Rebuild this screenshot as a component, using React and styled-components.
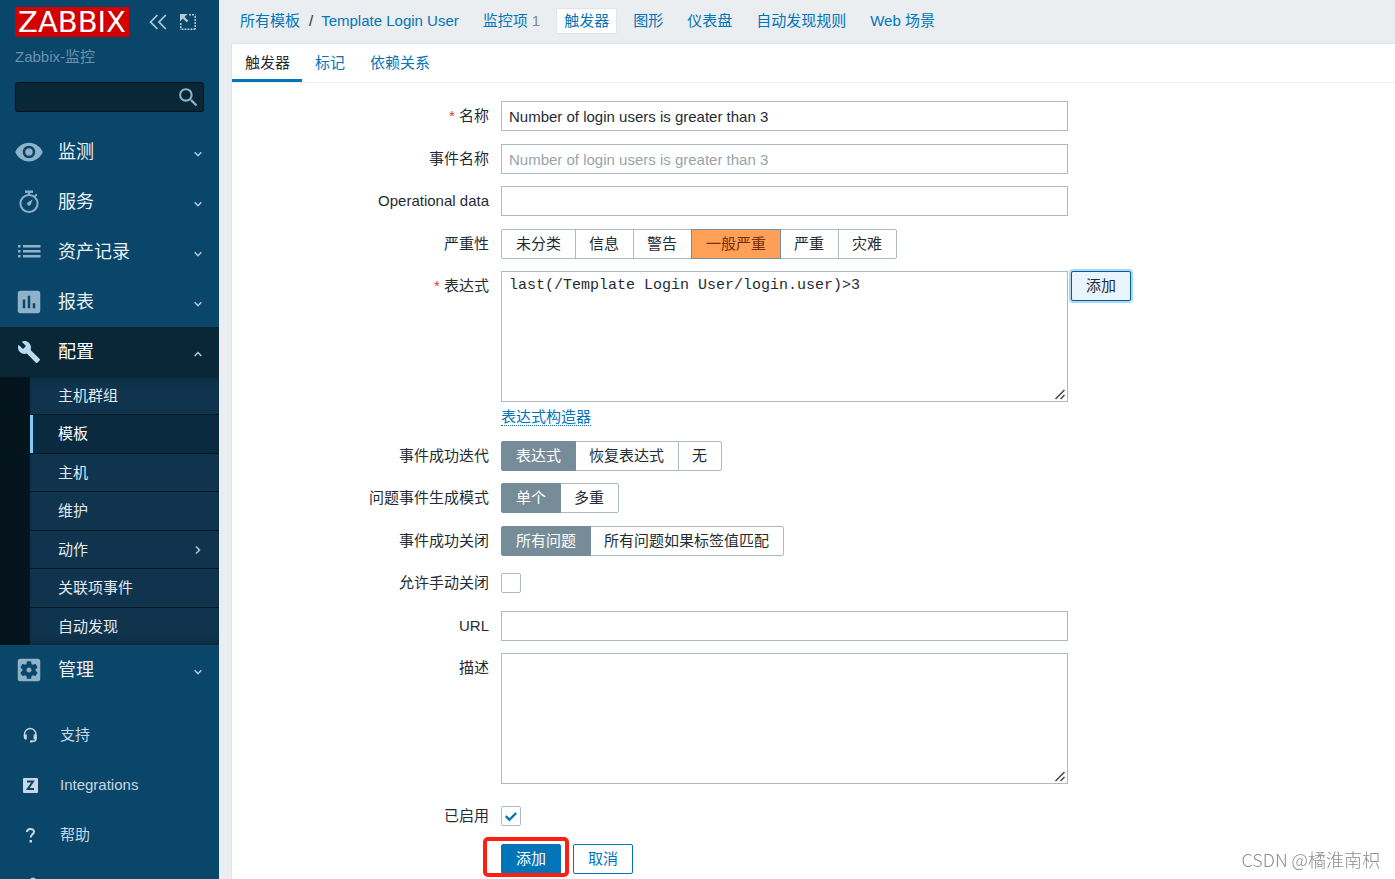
import styled, { createGlobalStyle, css } from "styled-components";
import {
  MdAssessment,
  MdBuild,
  MdPerson,
  MdRemoveRedEye,
  MdSearch,
  MdSettingsApplications,
} from "react-icons/md";

const GlobalStyle = createGlobalStyle`
  * {
    box-sizing: border-box;
  }

  body {
    margin: 0;
    background: #ebeef0;
    color: #1f2c33;
    font-family: "Liberation Sans", "Noto Sans CJK SC", sans-serif;
    font-size: 15px;
    line-height: 20px;
  }

  input, textarea, button {
    font: inherit;
    color: inherit;
  }

  a {
    color: #0275b8;
    text-decoration: none;
  }

  ul {
    list-style: none;
    margin: 0;
    padding: 0;
  }
`;

const Page = styled.div`
  display: flex;
  height: 100vh;
  overflow: hidden;
`;

/* sidebar */

const Sidebar = styled.aside`
  flex: 0 0 219px;
  background: #0a466a;
  overflow: hidden;
`;

const SidebarHeader = styled.div`
  display: flex;
  align-items: center;
  gap: 12px;
  padding: 7px 15px 0;
`;

const Logo = styled.a`
  flex: 0 0 114px;
  height: 30px;
  margin-right: 8px;
  background: #d40000;
  color: #fff;
  font-family: "DejaVu Sans", sans-serif;
  font-size: 29px;
  line-height: 30px;
  text-align: center;
`;

const HeaderButton = styled.button`
  display: flex;
  flex: 0 0 18px;
  height: 18px;
  padding: 0;
  border: 0;
  background: none;
  color: #b5cad8;
`;

const ServerName = styled.div`
  padding: 10px 15px 0;
  color: #6c91ab;
`;

const SearchForm = styled.form`
  display: flex;
  height: 30px;
  margin: 15px;
  border: 1px solid #040f16;
  border-radius: 3px;
  background: #0a2738;

  input {
    flex: 1;
    min-width: 0;
    padding: 0 8px;
    border: 0;
    background: none;
    color: #fff;
    outline: none;
  }

  button {
    display: flex;
    align-items: center;
    padding: 0 2px;
    border: 0;
    background: none;
    color: #8fb2c9;
  }
`;

const MenuLink = styled.a`
  display: flex;
  align-items: center;
  height: 50px;
  padding: 0 16px 0 14px;
  color: #e9f0f4;
  font-size: 18px;
  line-height: 24px;

  > span {
    flex: 1;
  }

  ${({ $open }) =>
    $open &&
    css`
      background: #0a2738;
      color: #fff;
    `}
`;

const MenuIcon = styled.i`
  display: flex;
  justify-content: center;
  width: 30px;
  margin-right: 14px;
  color: ${({ $open }) => ($open ? "#b9dcf2" : "#8fb2c9")};
`;

const SubMenu = styled.ul`
  border-left: 30px solid #04141d;
  background: #10344d;
  box-shadow: inset 0 8px 6px -6px #0a2738, inset 0 -8px 6px -6px #0a2738;
`;

const SubItem = styled.li`
  height: 38px;
  border-bottom: 1px solid #061a26;

  &:nth-child(even) {
    height: 39px;
  }

  &:last-child {
    height: 37px;
    border-bottom: 0;
  }
`;

const SubLink = styled.a`
  display: flex;
  align-items: center;
  justify-content: space-between;
  height: 100%;
  padding: 0 16px 0 25px;
  border-left: 3px solid ${({ $active }) => ($active ? "#7fc8fa" : "transparent")};
  background: ${({ $active }) => ($active ? "#0a2b3f" : "none")};
  color: ${({ $active }) => ($active ? "#fff" : "#e3ebf0")};
`;

const FooterMenu = styled.ul`
  margin-top: 15px;
`;

const FooterLink = styled.a`
  display: flex;
  align-items: center;
  height: 50px;
  padding: 0 22px;
  gap: 22px;
  color: #c8d7e1;
`;

/* content */

const Main = styled.main`
  display: flex;
  flex-direction: column;
  flex: 1;
  min-width: 0;
  padding-left: 12px;
`;

const Breadcrumbs = styled.nav`
  display: flex;
  align-items: center;
  gap: 8px;
  height: 43px;
  padding: 0 1px 2px;
  white-space: nowrap;
`;

const Crumb = styled.span`
  padding: 2px 7px;
  border: 1px solid ${({ $selected }) => ($selected ? "#dfe4e7" : "transparent")};
  border-radius: 2px;
  background: ${({ $selected }) => ($selected ? "#fff" : "none")};
`;

const Slash = styled.span`
  margin: 0 8px 0 9px;
`;

const Count = styled.sup`
  margin-left: 4px;
  color: #768d99;
  font-size: 15px;
  line-height: 20px;
  vertical-align: baseline;
`;

const Panel = styled.section`
  flex: 1;
  border-top: 1px solid #dfe4e7;
  border-left: 1px solid #dfe4e7;
  background: #fff;
`;

const Tabs = styled.nav`
  display: flex;
  height: 39px;
  border-bottom: 1px solid #ebeef0;
`;

const Tab = styled.a`
  height: 38px;
  padding: 9px 12px 0 13px;
  color: ${({ $active }) => ($active ? "#1f2c33" : "#0275b8")};
  border-bottom: ${({ $active }) => ($active ? "3px solid #0275b8" : "0")};
`;

const Form = styled.form`
  padding-top: 18px;
`;

const Row = styled.div`
  display: flex;
  gap: 12px;
  margin-bottom: 12px;

  &:nth-child(odd) {
    margin-bottom: 13px;
  }
`;

const rowLabel = css`
  flex: 0 0 257px;
  line-height: 30px;
  text-align: right;
`;

const Label = styled.label`
  ${rowLabel}

  ${({ $required }) =>
    $required &&
    css`
      &::before {
        content: "* ";
        color: #e33734;
      }
    `}
`;

const GroupLabel = styled.span`
  ${rowLabel}
`;

const Field = styled.div`
  display: flex;
  flex-wrap: wrap;
  flex: 1;
  align-items: center;
  min-width: 0;
  min-height: 30px;
`;

const fieldBox = css`
  width: 567px;
  max-width: 100%;
  border: 1px solid #acbbc2;
  background: #fff;
  outline: none;
`;

const TextInput = styled.input`
  ${fieldBox}
  height: 30px;
  padding: 0 7px;

  &::placeholder {
    color: #9aa3a8;
    opacity: 1;
  }
`;

const TextArea = styled.textarea`
  ${fieldBox}
  display: block;
  height: 131px;
  padding: 5px 7px;
  line-height: 18px;
  resize: both;

  && {
    font-family: ${({ $mono }) => ($mono ? '"Liberation Mono", monospace' : "inherit")};
  }

  &::-webkit-resizer {
    background: url("data:image/svg+xml,%3Csvg xmlns='http://www.w3.org/2000/svg' width='15' height='15' viewBox='0 0 15 15'%3E%3Cpath d='M3.500 13L12.500 4M8.500 13L12.500 9' fill='none' stroke='%23444' stroke-width='1.500'/%3E%3C/svg%3E")
      no-repeat right bottom;
  }
`;

const AreaField = styled.div`
  flex: 1;
  min-width: 0;
  padding-bottom: 4px;
`;

const ExpressionLine = styled.div`
  display: flex;
  align-items: flex-start;
  gap: 3px;
`;

const ConstructorLine = styled.div`
  padding-top: 8px;
  line-height: 14px;
`;

const ConstructorLink = styled.a`
  border-bottom: 1px dotted #0275b8;
`;

const Segments = styled.div`
  display: flex;
`;

const Segment = styled.label`
  height: 30px;
  margin-left: -1px;
  padding: 0 14px 0 13px;
  border: 1px solid #acbbc2;
  line-height: 28px;

  &:first-child {
    margin-left: 0;
    padding: 0 14px;
    border-radius: 2px 0 0 2px;
  }

  &:last-child {
    border-radius: 0 2px 2px 0;
  }

  &:has(input:checked) {
    z-index: 1;
    padding: 0 14px;
    border-color: #768d99;
    background: ${({ $severity }) => ($severity ? "#ffa059" : "#768d99")};
    color: ${({ $severity }) => ($severity ? "#733100" : "#fff")};
  }

  input {
    position: absolute;
    opacity: 0;
    pointer-events: none;
  }
`;

const Checkbox = styled.input`
  appearance: none;
  width: 20px;
  height: 20px;
  margin: 0;
  border: 1px solid #acbbc2;
  border-radius: 2px;
  background: #fff;

  &:checked {
    background: url("data:image/svg+xml,%3Csvg xmlns='http://www.w3.org/2000/svg' viewBox='0 0 18 18'%3E%3Cpath d='M3.8 9.2l3.6 3.6 6.8-6.8' fill='none' stroke='%230275b8' stroke-width='2.4'/%3E%3C/svg%3E");
  }
`;

const Button = styled.button`
  height: 30px;
  padding: 0 14px;
  border: 1px solid #0275b8;
  border-radius: 2px;
  background: ${({ $primary }) => ($primary ? "#0275b8" : "#fff")};
  color: ${({ $primary }) => ($primary ? "#fff" : "#0275b8")};
  line-height: 28px;

  ${({ $focused }) =>
    $focused &&
    css`
      border-color: #015f95;
      background: #e8f4fe;
      color: #1f2c33;
      box-shadow: 0 0 0 2px #aed6f7;
    `}
`;

const FormFooter = styled.div`
  display: flex;
  gap: 12px;
  padding: 1px 0 0 269px;
`;

const Marked = styled.div`
  position: relative;

  &::after {
    content: "";
    position: absolute;
    inset: -7px -8px -3px -18px;
    border: 4px solid #fc2013;
    border-radius: 5px;
    pointer-events: none;
  }
`;

const Watermark = styled.div`
  position: fixed;
  right: 15px;
  bottom: 7px;
  color: #8e8e8e;
  font-family: "Noto Sans CJK SC", sans-serif;
  font-size: 18px;
  font-weight: 300;
  line-height: 26px;
`;

/* icons */

const CollapseIcon = () => (
  <svg width="18" height="18" viewBox="0 0 18 18" fill="none" stroke="currentColor" strokeWidth="1.7">
    <path d="M8.4 2L1.6 9l6.8 7M16.8 2L10 9l6.8 7" />
  </svg>
);

const KioskIcon = () => (
  <svg width="18" height="18" viewBox="0 0 18 18" fill="none" stroke="currentColor">
    <path d="M10 1.700h6.500M16.200 3v13M16.500 16.200H1M1.800 15V9" strokeWidth="1.500" strokeDasharray="2 1" />
    <path d="M3 3l5.500 5.500" strokeWidth="2.400" />
    <path d="M1 1h7.500L1 8.500z" fill="currentColor" stroke="none" />
  </svg>
);

const StopwatchIcon = () => (
  <svg width="24" height="24" viewBox="0 0 24 24" fill="none" stroke="currentColor">
    <circle cx="12" cy="13.500" r="8.600" strokeWidth="2" />
    <path d="M8 1.700h8" strokeWidth="2.400" />
    <path d="M12 2v3M17.800 6.400l2-2" strokeWidth="2" />
    <path d="M15.600 9.600l-1.900 5.200a2 2 0 1 1-3.200-2.400z" fill="currentColor" stroke="none" />
  </svg>
);

const ListIcon = () => (
  <svg width="24" height="16" viewBox="0 0 24 16" fill="currentColor">
    <path d="M1 1h2.500v2.400H1zM6 1h17.500v2.400H6zM1 6h2.500v2.400H1zM6 6h17.500v2.400H6zM1 11h2.500v2.400H1zM6 11h17.500v2.400H6z" />
  </svg>
);

const Chevron = ({ dir = "down" }) => {
  const paths = { down: "M1.700 5.200L5 8.700l3.300-3.500", up: "M1.700 9L5 5.500 8.300 9", right: "M3 1.500L6.500 5 3 8.500" };
  return (
    <svg width="10" height="10" viewBox="0 0 10 10" fill="none" stroke="#b5cad8" strokeWidth="1.500">
      <path d={paths[dir]} />
    </svg>
  );
};

const HeadsetIcon = () => (
  <svg width="16" height="16" viewBox="0 0 16 16" fill="none" stroke="currentColor">
    <path d="M2.500 9V7.200a5.700 5.700 0 0 1 11.400 0V12c0 1.700-1 2.300-2.400 2.300H9" strokeWidth="1.400" />
    <path d="M1.800 7.500h3v5h-1.200a1.800 1.800 0 0 1-1.800-1.800zM14.600 7.500h-3v5h3z" fill="currentColor" stroke="none" />
    <path d="M8 13.500h2.500v2H8z" fill="currentColor" stroke="none" />
  </svg>
);

const IntegrationsIcon = () => (
  <svg width="16" height="16" viewBox="0 0 16 16">
    <rect x="1" y="1" width="15" height="15" rx="1" fill="currentColor" />
    <path d="M5 4.500h6L5.800 12H12" fill="none" stroke="#0a466a" strokeWidth="2" />
  </svg>
);

const HelpIcon = () => (
  <svg width="16" height="16" viewBox="0 0 16 16" fill="none" stroke="currentColor">
    <path d="M5 5c0-4 7-4 7-.300 0 2.600-3.300 2.600-3.300 5.800" strokeWidth="2" />
    <path d="M7.500 13h2.500v2.500H7.500z" fill="currentColor" stroke="none" />
  </svg>
);

const topMenu = [
  { label: "监测", icon: <MdRemoveRedEye size={30} /> },
  { label: "服务", icon: <StopwatchIcon /> },
  { label: "资产记录", icon: <ListIcon /> },
  { label: "报表", icon: <MdAssessment size={30} /> },
  {
    label: "配置",
    icon: <MdBuild size={24} />,
    items: ["主机群组", "模板", "主机", "维护", "动作", "关联项事件", "自动发现"],
  },
  { label: "管理", icon: <MdSettingsApplications size={30} /> },
];

const footerMenu = [
  { label: "支持", icon: <HeadsetIcon /> },
  { label: "Integrations", icon: <IntegrationsIcon /> },
  { label: "帮助", icon: <HelpIcon /> },
];

const RadioGroup = ({ name, label, options, selected, severity }) => (
  <Row role="radiogroup" aria-labelledby={name + "-label"}>
    <GroupLabel id={name + "-label"}>{label}</GroupLabel>
    <Field>
      <Segments>
        {options.map((option) => (
          <Segment key={option} $severity={severity}>
            <input type="radio" name={name} value={option} defaultChecked={option === selected} />
            {option}
          </Segment>
        ))}
      </Segments>
    </Field>
  </Row>
);

const TextRow = ({ id, label, required, ...props }) => (
  <Row>
    <Label htmlFor={id} $required={required}>{label}</Label>
    <Field>
      <TextInput id={id} type="text" {...props} />
    </Field>
  </Row>
);

const CheckRow = ({ id, label, checked }) => (
  <Row>
    <Label htmlFor={id}>{label}</Label>
    <Field>
      <Checkbox id={id} type="checkbox" defaultChecked={checked} />
    </Field>
  </Row>
);

const SideMenu = () => (
  <Sidebar>
    <SidebarHeader>
      <Logo href="#">ZABBIX</Logo>
      <HeaderButton type="button" aria-label="Collapse">
        <CollapseIcon />
      </HeaderButton>
      <HeaderButton type="button" aria-label="Kiosk mode">
        <KioskIcon />
      </HeaderButton>
    </SidebarHeader>
    <ServerName>Zabbix-监控</ServerName>
    <SearchForm role="search">
      <input type="text" aria-label="Search" />
      <button type="button" aria-label="Search">
        <MdSearch size={25} />
      </button>
    </SearchForm>
    <ul>
      {topMenu.map(({ label, icon, items }) => (
        <li key={label}>
          <MenuLink href="#" $open={!!items}>
            <MenuIcon $open={!!items}>{icon}</MenuIcon>
            <span>{label}</span>
            <Chevron dir={items ? "up" : "down"} />
          </MenuLink>
          {items && (
            <SubMenu>
              {items.map((item) => (
                <SubItem key={item}>
                  <SubLink href="#" $active={item === "模板"}>
                    {item}
                    {item === "动作" && <Chevron dir="right" />}
                  </SubLink>
                </SubItem>
              ))}
            </SubMenu>
          )}
        </li>
      ))}
    </ul>
    <FooterMenu>
      {footerMenu.map(({ label, icon }) => (
        <li key={label}>
          <FooterLink href="#">
            {icon}
            {label}
          </FooterLink>
        </li>
      ))}
      <li>
        <FooterLink href="#" aria-label="User settings">
          <MdPerson size={22} />
        </FooterLink>
      </li>
    </FooterMenu>
  </Sidebar>
);

const App = () => {
  return (
    <>
      <GlobalStyle />
      <Page>
        <SideMenu />
        <Main>
          <Breadcrumbs>
            <Crumb>
              <a href="#">所有模板</a>
              <Slash>/</Slash>
              <a href="#">Template Login User</a>
            </Crumb>
            <Crumb>
              <a href="#">监控项</a>
              <Count>1</Count>
            </Crumb>
            <Crumb $selected>
              <a href="#">触发器</a>
            </Crumb>
            {["图形", "仪表盘", "自动发现规则", "Web 场景"].map((label) => (
              <Crumb key={label}>
                <a href="#">{label}</a>
              </Crumb>
            ))}
          </Breadcrumbs>
          <Panel>
            <Tabs>
              <Tab href="#" $active>触发器</Tab>
              <Tab href="#">标记</Tab>
              <Tab href="#">依赖关系</Tab>
            </Tabs>
            <Form>
              <TextRow id="name" label="名称" required defaultValue="Number of login users is greater than 3" />
              <TextRow id="event_name" label="事件名称" placeholder="Number of login users is greater than 3" />
              <TextRow id="opdata" label="Operational data" />
              <RadioGroup
                name="priority"
                label="严重性"
                options={["未分类", "信息", "警告", "一般严重", "严重", "灾难"]}
                selected="一般严重"
                severity
              />
              <Row>
                <Label htmlFor="expression" $required>表达式</Label>
                <AreaField>
                  <ExpressionLine>
                    <TextArea
                      id="expression"
                      $mono
                      spellCheck={false}
                      defaultValue="last(/Template Login User/login.user)>3"
                    />
                    <Button type="button" $focused>添加</Button>
                  </ExpressionLine>
                  <ConstructorLine>
                    <ConstructorLink href="#">表达式构造器</ConstructorLink>
                  </ConstructorLine>
                </AreaField>
              </Row>
              <RadioGroup
                name="recovery_mode"
                label="事件成功迭代"
                options={["表达式", "恢复表达式", "无"]}
                selected="表达式"
              />
              <RadioGroup name="type" label="问题事件生成模式" options={["单个", "多重"]} selected="单个" />
              <RadioGroup
                name="correlation_mode"
                label="事件成功关闭"
                options={["所有问题", "所有问题如果标签值匹配"]}
                selected="所有问题"
              />
              <CheckRow id="manual_close" label="允许手动关闭" />
              <TextRow id="url" label="URL" />
              <Row>
                <Label htmlFor="description">描述</Label>
                <AreaField>
                  <TextArea id="description" />
                </AreaField>
              </Row>
              <CheckRow id="status" label="已启用" checked />
              <FormFooter>
                <Marked>
                  <Button type="submit" $primary>添加</Button>
                </Marked>
                <Button type="button">取消</Button>
              </FormFooter>
            </Form>
          </Panel>
        </Main>
      </Page>
      <Watermark>CSDN @橘淮南枳</Watermark>
    </>
  );
};

export default App;
